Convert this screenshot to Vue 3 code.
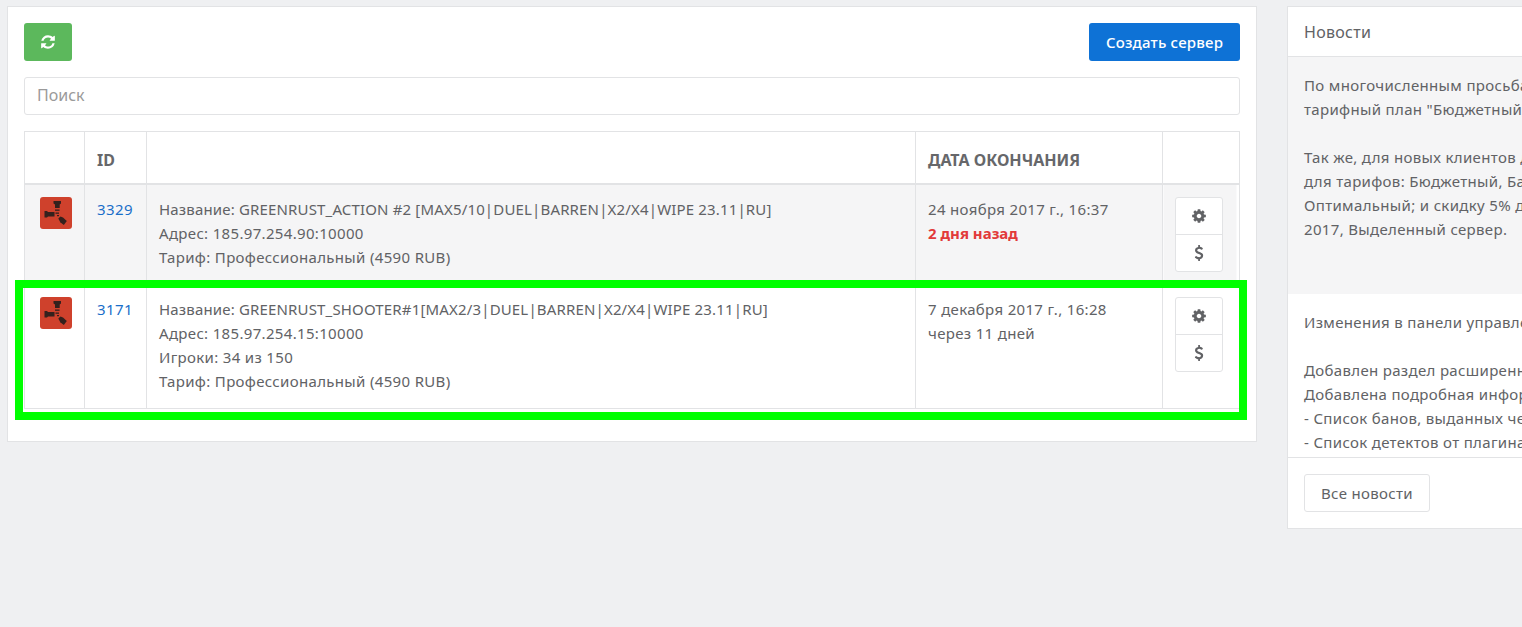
<script setup>
const refresh = 'M1639 1056q0 5-1 7-64 268-268 434.5t-478 166.5q-146 0-282.5-55t-243.5-157l-129 129q-19 19-45 19t-45-19-19-45v-448q0-26 19-45t45-19h448q26 0 45 19t19 45-19 45l-137 137q71 66 161 102t187 36q134 0 250-65t186-179q11-17 53-117 8-23 30-23h192q13 0 22.500 9.500t9.500 22.500zm25-800v448q0 26-19 45t-45 19h-448q-26 0-45-19t-19-45 19-45l138-138q-148-137-349-137-134 0-250 65t-186 179q-11 17-53 117-8 23-30 23h-199q-13 0-22.500-9.500t-9.500-22.500v-7q65-268 270-434.500t480-166.500q146 0 284 55.500t245 156.500l130-129q19-19 45-19t45 19 19 45z'
const cog = 'M1152 896q0-106-75-181t-181-75-181 75-75 181 75 181 181 75 181-75 75-181zm512-109v222q0 12-8 23t-20 13l-185 28q-19 54-39 91 35 50 107 138 10 12 10 25t-9 23q-27 37-99 108t-94 71q-12 0-26-9l-138-108q-44 23-91 38-16 136-29 186-7 28-36 28h-222q-14 0-24.500-8.500t-11.500-21.500l-28-184q-49-16-90-37l-141 107q-10 9-25 9-14 0-25-11-126-114-165-168-7-10-7-23 0-12 8-23 15-21 51-66.500t54-70.500q-27-50-41-99l-183-27q-13-2-21-12.500t-8-23.500v-222q0-12 8-23t19-13l186-28q14-46 39-92-40-57-107-138-10-12-10-24 0-10 9-23 26-36 98.500-107.500t94.500-71.500q13 0 26 10l138 107q44-23 91-38 16-136 29-186 7-28 36-28h222q14 0 24.500 8.500t11.500 21.500l28 184q49 16 90 37l142-107q9-9 24-9 13 0 25 10 129 119 165 170 7 8 7 22 0 12-8 23-15 21-51 66.500t-54 70.500q26 50 41 98l183 28q13 2 21 12.500t8 23.500z'
const usd = 'M1362 1185q0 153-99.500 263.500t-258.500 136.500v175q0 14-9 23t-23 9h-135q-13 0-22.500-9.500t-9.500-22.500v-175q-66-9-127.500-31t-101.500-44.500-74-48-46.500-37.500-17.500-18q-17-21-2-41l103-135q7-10 23-12 15-2 24 9l2 2q113 99 243 125 37 8 74 8 81 0 142.500-43t61.500-122q0-28-15-53t-33.500-42-58.500-37.500-66-32-80-32.500q-39-16-61.500-25t-61.500-26.500-62.500-31-56.500-35.500-53.500-42.500-43.500-49-35.500-58-21-66.500-8.500-78q0-138 98-242t255-134v-180q0-13 9.500-22.500t22.500-9.500h135q14 0 23 9t9 23v176q57 6 110.500 23t87 33.500 63.500 37.500 39 29 15 14q17 18 5 38l-81 146q-8 15-23 16-14 3-27-7-3-3-14.500-12t-39-26.500-58.500-32-74.500-26-85.500-11.500q-95 0-155 43t-60 111q0 26 8.500 48t29.500 41.500 39.500 33 56 31 60.500 27 70 27.500q53 20 81 31.500t76 35 75.500 42.500 62 50 53 63.500 31.500 76.500 13 94z'

const servers = [
  {
    id: 3329,
    name: 'Название: GREENRUST_ACTION #2 [MAX5/10|DUEL|BARREN|X2/X4|WIPE 23.11|RU]',
    lines: ['Адрес: 185.97.254.90:10000', 'Тариф: Профессиональный (4590 RUB)'],
    date: '24 ноября 2017 г., 16:37',
    rel: '2 дня назад',
    expired: true,
  },
  {
    id: 3171,
    name: 'Название: GREENRUST_SHOOTER#1[MAX2/3|DUEL|BARREN|X2/X4|WIPE 23.11|RU]',
    lines: ['Адрес: 185.97.254.15:10000', 'Игроки: 34 из 150', 'Тариф: Профессиональный (4590 RUB)'],
    date: '7 декабря 2017 г., 16:28',
    rel: 'через 11 дней',
    expired: false,
  },
]

const newsFirst = ['По многочисленным просьбам клиентов', 'тарифный план "Бюджетный" возвращён', '', 'Так же, для новых клиентов действует', 'для тарифов: Бюджетный, Базовый,', 'Оптимальный; и скидку 5% до конца', '2017, Выделенный сервер.']
const newsSecond = ['Изменения в панели управления', '', 'Добавлен раздел расширенной статистики', 'Добавлена подробная информация:', '- Список банов, выданных через панель', '- Список детектов от плагина']
</script>

<template>
  <div class="page">
    <section class="card main">
      <div class="toolbar">
        <button class="btn btn-green" aria-label="Обновить">
          <svg class="refresh" viewBox="0 0 1792 1792"><path :d="refresh" fill="currentColor" /></svg>
        </button>
        <button class="btn btn-blue">Создать сервер</button>
      </div>
      <div class="search">Поиск</div>
      <table class="servers">
        <colgroup>
          <col class="c1" /><col class="c2" /><col class="c3" /><col class="c4" /><col class="c5" />
        </colgroup>
        <thead>
          <tr><th></th><th>ID</th><th></th><th>ДАТА ОКОНЧАНИЯ</th><th></th></tr>
        </thead>
        <tbody>
          <tr v-for="(s, i) in servers" :key="s.id" :class="i === 0 ? 'striped' : 'plain'">
            <td class="icon-cell">
              <svg class="game" viewBox="0 0 32 32">
                <rect width="32" height="32" rx="3" fill="#cf412c" />
                <g fill="#35211d">
                  <path d="M13.500 4h7.500v2.500l-1.300 1V11h-4.700V7.500l-1.500-1z" />
                  <path d="M4.500 14h2.500l1 1h6.500v4.500H8l-1 1H4.500z" />
                  <path d="M20.500 19.500l2.500 1 3.800 3.500-3 4-3.500-2.800-2-3.600z" />
                  <rect x="15" y="12.500" width="4.500" height="1.300" />
                  <rect x="15.500" y="15.500" width="3.500" height="1.300" />
                  <rect x="17" y="18" width="2" height="1.200" />
                </g>
              </svg>
            </td>
            <td><span class="link">{{ s.id }}</span></td>
            <td>
              <div class="name">{{ s.name }}</div>
              <div v-for="l in s.lines" :key="l">{{ l }}</div>
            </td>
            <td>
              <div>{{ s.date }}</div>
              <div :class="{ overdue: s.expired }">{{ s.rel }}</div>
            </td>
            <td class="actions-cell">
              <div class="actions">
                <button class="action" aria-label="Настройки">
                  <svg class="cog" viewBox="0 0 1792 1792"><path :d="cog" fill="currentColor" /></svg>
                </button>
                <button class="action" aria-label="Оплата">
                  <svg class="usd" viewBox="0 0 1792 1792"><path :d="usd" fill="currentColor" /></svg>
                </button>
              </div>
            </td>
          </tr>
        </tbody>
      </table>
      <div class="highlight"></div>
    </section>

    <aside class="card news">
      <header class="news-head">Новости</header>
      <div class="news-item first">
        <div v-for="(l, i) in newsFirst" :key="i" class="line">{{ l }}</div>
      </div>
      <div class="news-item second">
        <div v-for="(l, i) in newsSecond" :key="i" class="line">{{ l }}</div>
      </div>
      <footer class="news-foot"><button class="btn btn-light">Все новости</button></footer>
    </aside>
  </div>
</template>

<style scoped>
.page {
  display: flex;
  align-items: flex-start;
  gap: 30px;
  width: 1700px;
  padding: 6px 0 0 7px;
  font-family: "Noto Sans", "Open Sans", sans-serif;
  font-size: 15px;
  letter-spacing: 0.33px;
  line-height: 24px;
  color: #616265;
}
.card {
  background: #fff;
  border: 1px solid #e2e3e5;
  box-sizing: border-box;
}
.main {
  position: relative;
  width: 1250px;
  height: 436px;
  padding: 16px;
  flex: none;
}
.toolbar {
  display: flex;
  justify-content: space-between;
}
.btn {
  height: 38px;
  border-radius: 3px;
  border: 1px solid transparent;
  font: inherit;
  letter-spacing: inherit;
  display: flex;
  align-items: center;
  justify-content: center;
  padding: 0;
}
.btn-green {
  width: 48px;
  background: #5cb85c;
  color: #fff;
}
.refresh { width: 16px; height: 16px; }
.btn-blue {
  width: 151px;
  background: #0e72d6;
  color: #fff;
  font-weight: 500;
  letter-spacing: 0.2px;
}
.search {
  margin-top: 16px;
  height: 38px;
  box-sizing: border-box;
  border: 1px solid #e2e3e5;
  border-radius: 3px;
  padding: 5px 12px;
  font-size: 16px;
  letter-spacing: 0;
  color: #9a9a9a;
}
.servers {
  margin-top: 16px;
  width: 1215px;
  border-collapse: collapse;
  table-layout: fixed;
}
.c1 { width: 60px; }
.c2 { width: 62px; }
.c3 { width: 769px; }
.c4 { width: 247px; }
.c5 { width: 77px; }
th, td {
  border: 1px solid #e2e3e5;
  padding: 12px;
  text-align: left;
  vertical-align: top;
}
th {
  height: 51px;
  box-sizing: border-box;
  padding: 16px 12px 11px;
  border-bottom-width: 2px;
  font-size: 16px;
  letter-spacing: 0;
  font-weight: 700;
  color: #66676a;
}
.striped td { background: #f5f5f6; height: 99px; box-sizing: border-box; }
.striped td:last-child { background: linear-gradient(to right, #f5f5f6 calc(100% - 3px), #fff 0); }
.plain td { height: 124px; box-sizing: border-box; }
.name { letter-spacing: 0.16px; }
.icon-cell { padding: 12px 0 0 15px; }
.game { display: block; width: 32px; height: 32px; }
.link { color: #1a6fc9; letter-spacing: 0.4px; }
.overdue { color: #e23a3a; font-weight: 700; letter-spacing: 0; }
.actions {
  width: 48px;
  border: 1px solid #e2e3e5;
  border-radius: 3px;
  background: #fff;
  box-sizing: border-box;
}
.action {
  display: flex;
  align-items: center;
  justify-content: center;
  box-sizing: border-box;
  width: 100%;
  height: 36px;
  padding: 0;
  background: none;
  border: 0;
  color: #616265;
}
.action + .action { height: 37px; border-top: 1px solid #e2e3e5; }
.cog { width: 16px; height: 16px; }
.usd { width: 16px; height: 16px; }
.highlight {
  position: absolute;
  left: 7px;
  top: 273px;
  width: 1232px;
  height: 140px;
  box-sizing: border-box;
  border: 8px solid #00ff00;
  pointer-events: none;
}
.news {
  width: 400px;
  height: 523px;
  flex: none;
  display: flex;
  flex-direction: column;
}
.news-head {
  height: 50px;
  box-sizing: border-box;
  padding: 13px 16px 11px;
  border-bottom: 1px solid #e2e3e5;
  font-size: 16px;
  letter-spacing: 0.3px;
}
.news-item {
  padding: 16px;
  overflow: hidden;
  box-sizing: border-box;
}
.first { height: 237px; background: #f5f5f6; }
.second { height: 163px; background: #fff; }
.line { min-height: 24px; white-space: nowrap; }
.news-foot {
  flex: 1;
  border-top: 1px solid #e2e3e5;
  padding: 16px;
}
.btn-light {
  width: 126px;
  background: #fff;
  border-color: #e2e3e5;
  color: #616265;
}
</style>

<style>
html, body {
  margin: 0;
  background: #eff0f2;
  overflow: hidden;
}
</style>
